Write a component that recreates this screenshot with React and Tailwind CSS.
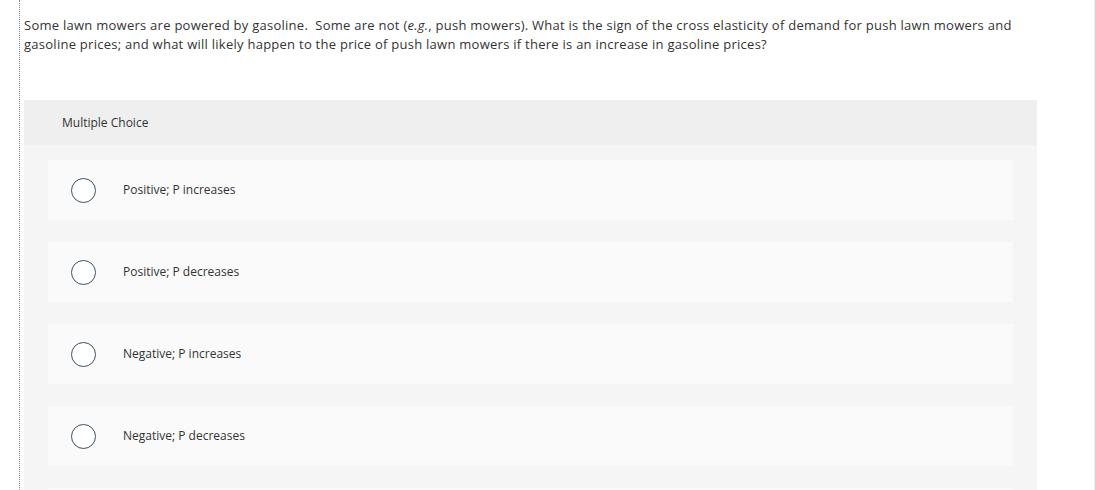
import React from 'react';

const choices = [
    'Positive; P increases',
    'Positive; P decreases',
    'Negative; P increases',
    'Negative; P decreases',
    '',
];

function Radio() {
    return <span className="block w-[25px] h-[25px] rounded-full border-[1.5px] border-[#3d5162] bg-white shrink-0" />;
}

export default function App() {
    return (
        <div className="w-[1095px] h-[490px] overflow-hidden bg-white border-r border-[#efefef] font-['Open_Sans',sans-serif] text-[#333]">
            <div className="ml-[19px] h-full border-l border-dotted border-[#888] pl-[4px]">
                {/* question */}
                <p className="pt-[16px] text-[13px] leading-[19px] tracking-[0.26px] whitespace-nowrap">
                    Some lawn mowers are powered by gasoline.&nbsp; Some are not (<i>e.g.</i>, push mowers). What is the sign of the cross elasticity of demand for push lawn mowers and
                    <br />
                    gasoline prices; and what will likely happen to the price of push lawn mowers if there is an increase in gasoline prices?
                </p>

                {/* answer panel */}
                <div className="mt-[46px] w-[1013px] bg-[#f5f5f5]">
                    <div className="h-[45px] bg-[#efefef] flex items-center pl-[38px] text-[12px]">
                        Multiple Choice
                    </div>
                    <div className="flex flex-col gap-[22px] pt-[15px] px-[24px]">
                        {choices.map((c, i) => (
                            <div key={i} className="h-[60px] bg-[#fafafa] flex items-center pl-[23px]">
                                {c && <Radio />}
                                {c && <span className="ml-[27px] text-[12px]">{c}</span>}
                            </div>
                        ))}
                    </div>
                </div>
            </div>
        </div>
    );
}
